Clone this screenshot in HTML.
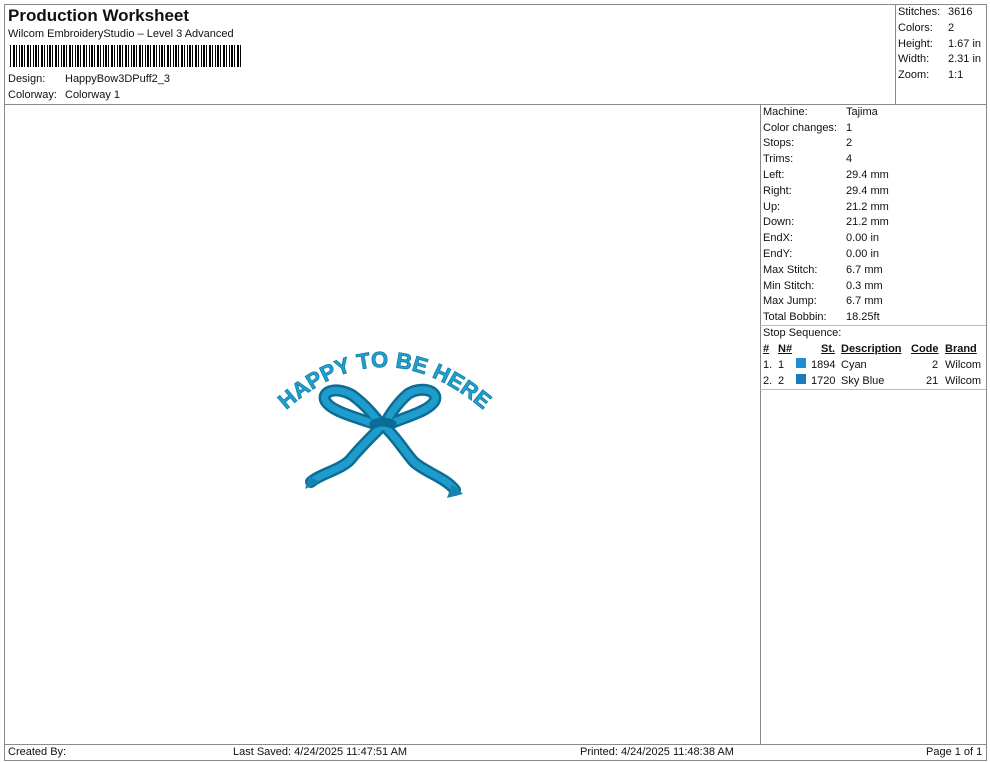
<!DOCTYPE html>
<html><head><meta charset="utf-8"><style>
*{margin:0;padding:0;box-sizing:border-box}
body{width:990px;height:762px;background:#fff;font-family:"Liberation Sans",Arial,sans-serif;font-size:11px;color:#111;position:relative;overflow:hidden}
.a{position:absolute;white-space:nowrap}
.ln{position:absolute;background:#8a8a8a}
.r{position:absolute;left:763px;font-size:11px;white-space:nowrap;width:200px}
.r span{position:absolute;left:83px;white-space:nowrap}
.s{position:absolute;left:898px;font-size:11px;white-space:nowrap;width:88px}
.s span{position:absolute;left:50px;white-space:nowrap}
u{text-decoration:underline}
</style></head><body>
<div class="ln" style="left:4px;top:4px;width:983px;height:1px"></div>
<div class="ln" style="left:4px;top:4px;width:1px;height:757px"></div>
<div class="ln" style="left:986px;top:4px;width:1px;height:757px"></div>
<div class="ln" style="left:4px;top:104px;width:983px;height:1px"></div>
<div class="ln" style="left:895px;top:4px;width:1px;height:100px"></div>
<div class="ln" style="left:760px;top:104px;width:1px;height:640px"></div>
<div class="ln" style="left:4px;top:744px;width:983px;height:1px"></div>
<div class="ln" style="left:4px;top:760px;width:983px;height:1px"></div>
<div class="ln" style="left:760px;top:325px;width:226px;height:1px;background:#bbb"></div>
<div class="ln" style="left:760px;top:389px;width:226px;height:1px;background:#bbb"></div>

<div class="a" style="left:8px;top:6px;font-size:17px;font-weight:bold">Production Worksheet</div>
<div class="a" style="left:8px;top:28px">Wilcom EmbroideryStudio – Level 3 Advanced</div>
<div class="a" style="left:10px;top:45px;width:233px;height:22px;background:
repeating-linear-gradient(90deg,#000 0 1px,#fff 1px 3px,#000 3px 5px,#fff 5px 6px,#000 6px 7px,#fff 7px 9px,#000 9px 10px,#fff 10px 11px,#000 11px 13px,#fff 13px 14px)"></div>
<div class="a" style="left:8px;top:73px">Design:</div><div class="a" style="left:65px;top:73px">HappyBow3DPuff2_3</div>
<div class="a" style="left:8px;top:89px">Colorway:</div><div class="a" style="left:65px;top:89px">Colorway 1</div>

<div class="s" style="top:6px">Stitches:<span>3616</span></div>
<div class="s" style="top:22px">Colors:<span>2</span></div>
<div class="s" style="top:38px">Height:<span>1.67 in</span></div>
<div class="s" style="top:53px">Width:<span>2.31 in</span></div>
<div class="s" style="top:69px">Zoom:<span>1:1</span></div>

<div class="r" style="top:106px">Machine:<span>Tajima</span></div>
<div class="r" style="top:122px">Color changes:<span>1</span></div>
<div class="r" style="top:137px">Stops:<span>2</span></div>
<div class="r" style="top:153px">Trims:<span>4</span></div>
<div class="r" style="top:169px">Left:<span>29.4 mm</span></div>
<div class="r" style="top:185px">Right:<span>29.4 mm</span></div>
<div class="r" style="top:201px">Up:<span>21.2 mm</span></div>
<div class="r" style="top:216px">Down:<span>21.2 mm</span></div>
<div class="r" style="top:232px">EndX:<span>0.00 in</span></div>
<div class="r" style="top:248px">EndY:<span>0.00 in</span></div>
<div class="r" style="top:264px">Max Stitch:<span>6.7 mm</span></div>
<div class="r" style="top:280px">Min Stitch:<span>0.3 mm</span></div>
<div class="r" style="top:295px">Max Jump:<span>6.7 mm</span></div>
<div class="r" style="top:311px">Total Bobbin:<span>18.25ft</span></div>
<div class="a" style="left:763px;top:327px">Stop Sequence:</div>
<div class="a" style="left:763px;top:343px;font-weight:bold"><u>#</u></div>
<div class="a" style="left:778px;top:343px;font-weight:bold"><u>N#</u></div>
<div class="a" style="left:821px;top:343px;font-weight:bold"><u>St.</u></div>
<div class="a" style="left:841px;top:343px;font-weight:bold"><u>Description</u></div>
<div class="a" style="left:911px;top:343px;font-weight:bold"><u>Code</u></div>
<div class="a" style="left:945px;top:343px;font-weight:bold"><u>Brand</u></div>
<div class="a" style="left:763px;top:359px">1.</div><div class="a" style="left:778px;top:359px">1</div>
<div class="a" style="left:796px;top:358px;width:10px;height:10px;background:#1d8fd0"></div>
<div class="a" style="left:811px;top:359px">1894</div><div class="a" style="left:841px;top:359px">Cyan</div>
<div class="a" style="left:932px;top:359px">2</div><div class="a" style="left:945px;top:359px">Wilcom</div>
<div class="a" style="left:763px;top:375px">2.</div><div class="a" style="left:778px;top:375px">2</div>
<div class="a" style="left:796px;top:374px;width:10px;height:10px;background:#177fb8"></div>
<div class="a" style="left:811px;top:375px">1720</div><div class="a" style="left:841px;top:375px">Sky Blue</div>
<div class="a" style="left:926px;top:375px">21</div><div class="a" style="left:945px;top:375px">Wilcom</div>

<svg class="a" style="left:0;top:0" width="760" height="740">
<defs><path id="arc" d="M284,412 Q382,322 486,412"/></defs>
<text font-family="Liberation Sans Narrow,Liberation Sans,sans-serif" font-weight="bold" font-size="22" fill="#22a0cc" stroke="#0d7fa8" stroke-width="0.8" letter-spacing="0.3"><textPath href="#arc" startOffset="50%" text-anchor="middle">HAPPY TO BE HERE</textPath></text>
<g fill="none" stroke-linecap="round" stroke-linejoin="round">
<g stroke="#0b6d96" stroke-width="12">
<path d="M383,427 C360,418 330,412 325,400 C322,390 338,387 352,395 C366,405 376,418 383,427"/>
<path d="M383,427 C400,418 430,412 435,400 C438,390 420,386 408,394 C396,404 388,418 383,427"/>
<path d="M378,430 C368,440 358,450 350,460 C340,470 320,474 311,482"/>
<path d="M388,430 C398,440 405,452 414,462 C425,472 446,478 455,490"/>
</g>
<g stroke="#1f9ccb" stroke-width="7">
<path d="M383,427 C360,418 330,412 325,400 C322,390 338,387 352,395 C366,405 376,418 383,427"/>
<path d="M383,427 C400,418 430,412 435,400 C438,390 420,386 408,394 C396,404 388,418 383,427"/>
<path d="M378,430 C368,440 358,450 350,460 C340,470 320,474 311,482"/>
<path d="M388,430 C398,440 405,452 414,462 C425,472 446,478 455,490"/>
</g>
<path d="M374,424 Q383,420 392,424" stroke="#0b6d96" stroke-width="9"/>
</g>
<path d="M305,489 L309,476 L320,482 Z" fill="#1683b0"/>
<path d="M447,498 L452,484 L463,494 Z" fill="#1683b0"/>
</svg>

<div class="a" style="left:8px;top:746px">Created By:</div>
<div class="a" style="left:233px;top:746px">Last Saved: 4/24/2025 11:47:51 AM</div>
<div class="a" style="left:580px;top:746px">Printed: 4/24/2025 11:48:38 AM</div>
<div class="a" style="left:926px;top:746px">Page 1 of 1</div>
</body></html>
